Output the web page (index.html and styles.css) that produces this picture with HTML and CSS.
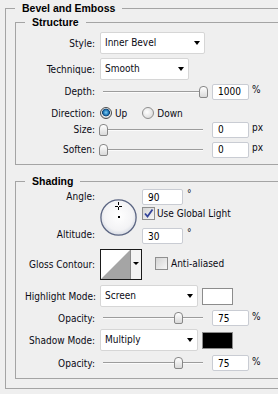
FILE: index.html
```html
<!DOCTYPE html>
<html lang="en">
<head>
    <meta charset="UTF-8">
    <meta name="viewport" content="width=device-width, initial-scale=1.0">
    <title>Bevel and Emboss</title>
    <link rel="stylesheet" href="styles.css">
</head>
<body>
    <div class="panel">
        <fieldset class="group outer">
            <legend>Bevel and Emboss</legend>

            <fieldset class="group structure">
                <legend>Structure</legend>

                <div class="row row-select">
                    <span class="lbl">Style:</span>
                    <div class="select style-select">Inner Bevel<i class="caret"></i></div>
                </div>
                <div class="row row-select">
                    <span class="lbl">Technique:</span>
                    <div class="select tech-select">Smooth<i class="caret"></i></div>
                </div>
                <div class="row row-slider depth-row">
                    <span class="lbl">Depth:</span>
                    <div class="slider"><div class="track"></div><div class="thumb" style="left: 100%"></div></div>
                    <input class="num" type="text" value="1000">
                    <span class="unit">%</span>
                </div>
                <div class="row row-radio">
                    <span class="lbl">Direction:</span>
                    <span class="radio on"></span><span class="opt">Up</span>
                    <span class="radio down"></span><span class="opt">Down</span>
                </div>
                <div class="row row-slider">
                    <span class="lbl">Size:</span>
                    <div class="slider"><div class="track"></div><div class="thumb" style="left: 0%"></div></div>
                    <input class="num" type="text" value="0">
                    <span class="unit">px</span>
                </div>
                <div class="row row-slider soften-row">
                    <span class="lbl">Soften:</span>
                    <div class="slider"><div class="track"></div><div class="thumb" style="left: 0%"></div></div>
                    <input class="num" type="text" value="0">
                    <span class="unit">px</span>
                </div>
            </fieldset>

            <fieldset class="group shading">
                <legend>Shading</legend>

                <div class="angle-block">
                    <div class="angle-labels">
                        <span class="lbl">Angle:</span>
                        <span class="lbl">Altitude:</span>
                    </div>
                    <div class="dial">
                        <svg width="37" height="37" viewBox="0 0 37 37">
                            <defs>
                                <radialGradient id="dialFill" cx="50%" cy="45%" r="55%">
                                    <stop offset="0" stop-color="#ffffff"/>
                                    <stop offset="0.75" stop-color="#f3f3f5"/>
                                    <stop offset="1" stop-color="#d6dae3"/>
                                </radialGradient>
                            </defs>
                            <circle cx="18.5" cy="18.5" r="17.6" fill="url(#dialFill)" stroke="#5b6582" stroke-width="1.3"/>
                            <rect x="18" y="17" width="2" height="2" fill="#000"/>
                            <path d="M18.5 3v3M18.5 8v3M15 7.5h3M19 7.5h3" stroke="#000" stroke-width="1"/>
                        </svg>
                    </div>
                    <div class="angle-fields">
                        <div class="field-row">
                            <input class="num wide" type="text" value="90">
                            <span class="deg">°</span>
                        </div>
                        <div class="check-row global">
                            <span class="check">
                                <svg width="11" height="11" viewBox="0 0 11 11"><path d="M2 5.5l2.5 3L9.5 1.5" fill="none" stroke="#34449a" stroke-width="1.8"/></svg>
                            </span>
                            <span>Use Global Light</span>
                        </div>
                        <div class="field-row altitude">
                            <input class="num wide" type="text" value="30">
                            <span class="deg">°</span>
                        </div>
                    </div>
                </div>

                <div class="row gloss-row">
                    <span class="lbl">Gloss Contour:</span>
                    <div class="contour">
                        <svg width="42" height="31" viewBox="0 0 42 31">
                            <rect x="0.5" y="0.5" width="41" height="30" fill="#fff" stroke="#1a1a1a"/>
                            <polygon points="1,30 30,1 30,30" fill="#a5a5a5"/>
                            <line x1="30.5" y1="1" x2="30.5" y2="30" stroke="#8a8a8a"/>
                            <rect x="31" y="1" width="10" height="29" fill="#f3f3f3"/>
                            <polygon points="33,13 39,13 36,16" fill="#000"/>
                        </svg>
                    </div>
                    <div class="check-row anti">
                        <span class="check"></span>
                        <span>Anti-aliased</span>
                    </div>
                </div>

                <div class="row row-select mode-row">
                    <span class="lbl">Highlight Mode:</span>
                    <div class="select mode-select">Screen<i class="caret"></i></div>
                    <span class="swatch light"></span>
                </div>
                <div class="row row-slider op-row">
                    <span class="lbl">Opacity:</span>
                    <div class="slider"><div class="track"></div><div class="thumb" style="left: 75%"></div></div>
                    <input class="num" type="text" value="75">
                    <span class="unit">%</span>
                </div>
                <div class="row row-select mode-row shadow-row">
                    <span class="lbl">Shadow Mode:</span>
                    <div class="select mode-select">Multiply<i class="caret"></i></div>
                    <span class="swatch dark"></span>
                </div>
                <div class="row row-slider op-row last-op">
                    <span class="lbl">Opacity:</span>
                    <div class="slider"><div class="track"></div><div class="thumb" style="left: 75%"></div></div>
                    <input class="num" type="text" value="75">
                    <span class="unit">%</span>
                </div>
            </fieldset>
        </fieldset>
    </div>
</body>
</html>
```

FILE: styles.css
```css
html, body {
    margin: 0;
    overflow: hidden;
}
body {
    background: #efefef;
    font-family: "DejaVu Sans Condensed", "DejaVu Sans", sans-serif;
    font-size: 10px;
    color: #0a0a14;
}
.panel {
    width: 273px;
    padding: 2px 0 0 5px;
}
/* the panel is cut at the right, so the groups have no right edge */
.group {
    margin: 0;
    min-width: 0;
    border: 1px solid #a4a4a4;
    border-right: none;
    padding: 0 0 0 9px;
}
.group legend {
    font-family: "Liberation Sans", Arial, sans-serif;
    font-weight: bold;
    font-size: 10.5px;
    line-height: 13px;
    padding: 0 7px;
    color: #000;
}
.outer {
    padding-top: 1px;
    padding-bottom: 9px;
}
.structure {
    padding-top: 3px;
    padding-bottom: 6px;
}
.shading {
    margin-top: 10px;
    padding-top: 1px;
    padding-bottom: 7px;
}
.row {
    display: flex;
    align-items: center;
}
.lbl {
    flex: none;
    width: 70px;
    margin-right: 5px;
    text-align: right;
    white-space: nowrap;
}
.row-select {
    height: 22px;
    margin-bottom: 4px;
}
.select {
    position: relative;
    box-sizing: border-box;
    height: 22px;
    line-height: 20px;
    padding-left: 4px;
    background: #fff;
    border: 1px solid #d6d6d6;
    border-radius: 2px;
}
.style-select { width: 105px; }
.tech-select { width: 89px; }
.mode-select { width: 98px; }
.caret {
    position: absolute;
    right: 4px;
    top: 8px;
    border-left: 3.5px solid transparent;
    border-right: 3.5px solid transparent;
    border-top: 4px solid #000;
}
.row-slider {
    height: 17px;
    margin-top: 3px;
}
.depth-row { margin-top: -1px; }
.slider {
    position: relative;
    flex: none;
    width: 100px;
    height: 12px;
    margin-left: 3px;
}
.track {
    margin-top: 5px;
    height: 1px;
    background: #9c9c9c;
    border-bottom: 1px solid #fbfbfb;
}
.thumb {
    position: absolute;
    top: 0;
    width: 7px;
    height: 10px;
    margin-left: -4px;
    border: 1px solid #878787;
    border-radius: 4px 4px 2px 2px;
    background: linear-gradient(#ffffff, #d9d9d9);
}
.num {
    box-sizing: border-box;
    width: 37px;
    height: 16px;
    margin: 0 0 0 9px;
    padding: 0 0 0 5px;
    font: inherit;
    color: #000;
    background: #fff;
    border: 1px solid #c9ccd3;
    border-radius: 2px;
    outline: none;
}
.unit {
    margin-left: 3px;
    align-self: flex-start;
    margin-top: 1px;
}
.row-radio {
    height: 16px;
    margin-top: 5px;
    margin-bottom: -3px;
}
.radio {
    flex: none;
    box-sizing: border-box;
    width: 12px;
    height: 12px;
    border-radius: 50%;
    border: 1px solid #8e8e8e;
    background: radial-gradient(circle at 40% 40%, #ffffff, #d2d2d2);
}
.radio.on {
    border-color: #4d4d4d;
    background: radial-gradient(circle at 50% 45%, #7fd0f6 0, #2178b8 2.5px, #10406c 3.6px, #f2f2f2 4.2px, #d8d8d8 5px);
}
.radio.down {
    margin-left: 15px;
}
.opt {
    margin-left: 3px;
}
.soften-row { margin-top: 3px; }

/* shading */
.angle-block {
    display: flex;
    align-items: flex-start;
    height: 54px;
}
.angle-labels {
    display: flex;
    flex-direction: column;
    justify-content: space-between;
    height: 54px;
    line-height: 16px;
}
.dial {
    flex: none;
    width: 37px;
    height: 37px;
    margin-top: 10px;
}
.dial svg, .contour svg, .check svg {
    display: block;
}
.angle-fields {
    margin-left: 5px;
}
.field-row {
    display: flex;
    height: 16px;
}
.field-row .num {
    margin-left: 0;
}
.num.wide {
    width: 41px;
}
.deg {
    margin-left: 4px;
    line-height: 10px;
}
.check-row {
    display: flex;
    align-items: center;
}
.check {
    flex: none;
    box-sizing: border-box;
    width: 13px;
    height: 13px;
    margin-right: 2px;
    border: 1px solid #8f8f8f;
    background: linear-gradient(135deg, #d4d4d4, #f7f7f7);
}
.global {
    margin-top: 2px;
    height: 13px;
}
.altitude {
    margin-top: 8px;
}
.gloss-row {
    margin-top: 6px;
    height: 31px;
}
.contour {
    flex: none;
    width: 42px;
    height: 31px;
}
.anti {
    margin-left: 13px;
    margin-top: -2px;
}
.anti .check {
    margin-right: 3px;
}
.mode-row {
    margin-top: 5px;
    margin-bottom: 0;
}
.swatch {
    flex: none;
    box-sizing: border-box;
    width: 31px;
    height: 17px;
    margin-left: 4px;
    border: 1px solid #8c8c8c;
}
.swatch.light { background: #fff; }
.swatch.dark { background: #000; }
.op-row {
    height: 16px;
    margin-top: 3px;
}
.shadow-row { margin-top: 3px; }
.last-op { margin-top: 4px; }
```
